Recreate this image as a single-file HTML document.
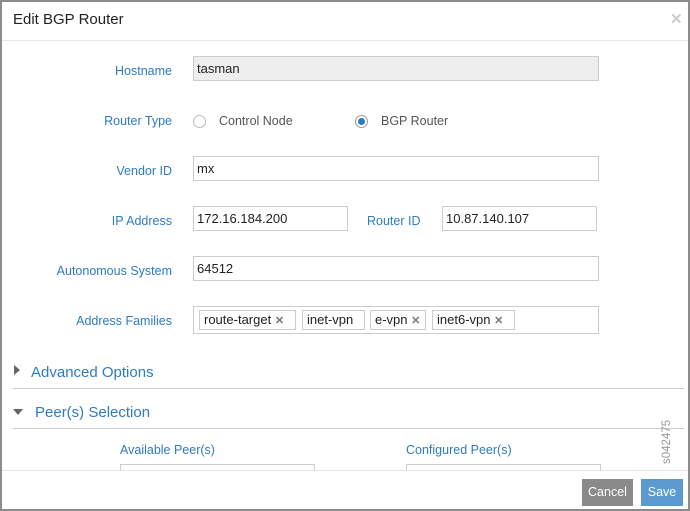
<html><head><style>
body{margin:0;width:690px;height:511px;overflow:hidden;font-family:"Liberation Sans",sans-serif;background:#fff}
#f{position:absolute;left:0;top:0;width:686px;height:507px;border:2px solid #8c8c8c;overflow:hidden}
.a{position:absolute}
.l{position:absolute;color:#2e7bbf;font-size:12.5px;text-align:right;width:170px;left:0}
.i{position:absolute;border:1px solid #ccc;height:25px;box-sizing:border-box;font-size:13px;line-height:24px;padding-left:3px;color:#222}
.t{position:absolute;top:3px;height:20px;border:1px solid #ccc;box-sizing:border-box;font-size:13px;line-height:18px;padding:0 4px;color:#222;white-space:nowrap}
.x{color:#777;font-size:11px;font-weight:bold}
.r{position:absolute;width:13px;height:13px;border:1px solid #bbb;border-radius:50%;box-sizing:border-box}
</style></head><body><div id="f">
<div class="a" style="left:11px;top:9px;font-size:15px;color:#222">Edit BGP Router</div>
<div class="a" style="left:668px;top:8px;font-size:15px;color:#ccc;font-weight:bold">✕</div>
<div class="a" style="left:0;top:38px;width:686px;height:1px;background:#e5e5e5"></div>
<div class="l" style="top:62px">Hostname</div>
<div class="i" style="left:191px;top:54px;width:406px;background:#eee">tasman</div>
<div class="l" style="top:112px">Router Type</div>
<div class="r" style="left:191px;top:113px"></div>
<div class="a" style="left:217px;top:112px;font-size:12.5px;color:#555">Control Node</div>
<div class="r" style="left:353px;top:113px;border-color:#999"><div class="a" style="left:2px;top:2px;width:7px;height:7px;border-radius:50%;background:#2e7bbf"></div></div>
<div class="a" style="left:379px;top:112px;font-size:12.5px;color:#555">BGP Router</div>
<div class="l" style="top:162px">Vendor ID</div>
<div class="i" style="left:191px;top:154px;width:406px">mx</div>
<div class="l" style="top:212px">IP Address</div>
<div class="i" style="left:191px;top:204px;width:155px">172.16.184.200</div>
<div class="a" style="left:365px;top:212px;font-size:12.5px;color:#2e7bbf">Router ID</div>
<div class="i" style="left:440px;top:204px;width:155px">10.87.140.107</div>
<div class="l" style="top:262px">Autonomous System</div>
<div class="i" style="left:191px;top:254px;width:406px">64512</div>
<div class="l" style="top:312px">Address Families</div>
<div class="i" style="left:191px;top:304px;width:406px;height:28px">
<div class="t" style="left:5px;width:97px">route-target <span class="x">✕</span></div>
<div class="t" style="left:108px;width:63px">inet-vpn</div>
<div class="t" style="left:176px;width:56px">e-vpn <span class="x">✕</span></div>
<div class="t" style="left:238px;width:83px">inet6-vpn <span class="x">✕</span></div>
</div>
<div class="a" style="left:12px;top:363px;width:0;height:0;border-top:5px solid transparent;border-bottom:5px solid transparent;border-left:6px solid #666"></div>
<div class="a" style="left:29px;top:362px;font-size:15px;color:#2e7bbf">Advanced Options</div>
<div class="a" style="left:11px;top:386px;width:671px;height:1px;background:#ccc"></div>
<div class="a" style="left:11px;top:407px;width:0;height:0;border-left:5px solid transparent;border-right:5px solid transparent;border-top:6px solid #666"></div>
<div class="a" style="left:33px;top:402px;font-size:15px;color:#2e7bbf">Peer(s) Selection</div>
<div class="a" style="left:11px;top:426px;width:671px;height:1px;background:#ccc"></div>
<div class="a" style="left:118px;top:441px;font-size:12.5px;color:#2e7bbf">Available Peer(s)</div>
<div class="a" style="left:404px;top:441px;font-size:12.5px;color:#2e7bbf">Configured Peer(s)</div>
<div class="a" style="left:118px;top:462px;width:193px;height:20px;border:1px solid #ccc"></div>
<div class="a" style="left:404px;top:462px;width:193px;height:20px;border:1px solid #ccc"></div>
<div class="a" style="left:659px;top:462px;transform:rotate(-90deg);transform-origin:0 0;font-size:11.5px;color:#999;white-space:nowrap">s042475</div>
<div class="a" style="left:0;top:468px;width:686px;height:40px;background:#fff;border-top:1px solid #e5e5e5"></div>
<div class="a" style="left:580px;top:477px;width:51px;height:27px;background:#8a8a8a;color:#fff;font-size:12.5px;line-height:27px;text-align:center">Cancel</div>
<div class="a" style="left:639px;top:477px;width:42px;height:27px;background:#5b9bd1;color:#fff;font-size:12.5px;line-height:27px;text-align:center">Save</div>
</div></body></html>
